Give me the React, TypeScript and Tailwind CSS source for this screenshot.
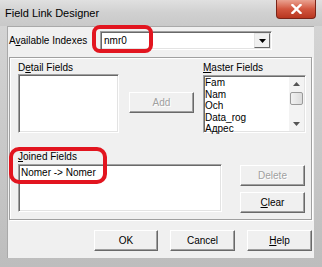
import React from "react";

// classic raised 3D button
function Btn({ children, disabled, className = "" }: { children: React.ReactNode; disabled?: boolean; className?: string }) {
  return (
    <div
      className={`flex items-center justify-center bg-[#f0f0f0] border border-t-white border-l-white border-r-[#696969] border-b-[#696969] shadow-[inset_-1px_-1px_0_#a0a0a0] text-[10px] ${
        disabled ? "text-[#a0a0a0] [text-shadow:1px_1px_0_#ffffff]" : "text-black"
      } ${className}`}
    >
      {children}
    </div>
  );
}

// sunken white box (list / combo)
function Sunken({ children, className = "" }: { children?: React.ReactNode; className?: string }) {
  return (
    <div
      className={`relative bg-white border border-t-[#a0a0a0] border-l-[#a0a0a0] border-r-white border-b-white shadow-[inset_1px_1px_0_#696969,inset_-1px_-1px_0_#e3e3e3] ${className}`}
    >
      {children}
    </div>
  );
}

const masterFields = ["Fam", "Nam", "Och", "Data_rog", "Адрес"];

export default function App() {
  return (
    <div className="relative w-[322px] h-[267px] flex flex-col bg-gradient-to-b from-[#d6d6d6] to-[#bdbdbd] font-['Liberation_Sans',Arial,sans-serif] overflow-hidden">
      {/* Title bar */}
      <div className="h-[26px] flex items-start justify-between bg-gradient-to-b from-[#e0e0e0] via-[#d0d0d0] to-[#c9c9c9]">
        <span className="mt-[8px] ml-[5px] text-[11px] text-black leading-none">Field Link Designer</span>
        <div className="mr-[6px] w-[40px] h-[19px] rounded-b-[4px] border border-t-0 border-[#7a2418] bg-gradient-to-b from-[#e9a190] via-[#d2563f] to-[#b8361f] flex items-center justify-center">
          <svg width="11" height="10" viewBox="0 0 11 10">
            <path d="M1.5 1 L9.5 9 M9.5 1 L1.5 9" stroke="#ffffff" strokeWidth="2.4" strokeLinecap="square" />
          </svg>
        </div>
      </div>

      {/* Frame + content */}
      <div className="flex-1 flex pl-[7px] pr-[8px] pb-[9px]">
        <div className="flex-1 flex flex-col bg-[#f0f0f0] border-l border-t border-[#a9a9a9]">
          {/* Available indexes */}
          <div className="mt-[4px] h-[19px] flex items-center">
            <span className="w-[92px] pl-[1px] text-[10px] text-black">
              A<span className="underline">v</span>ailable Indexes
            </span>
            <Sunken className="w-[172px] h-[19px] flex items-center">
              <span className="ml-[3px] text-[10px] text-black">nmr0</span>
              <div className="absolute right-[1px] top-[1px] w-[16px] h-[15px] bg-[#f0f0f0] border border-t-[#e3e3e3] border-l-[#e3e3e3] border-r-[#696969] border-b-[#696969] flex items-center justify-center">
                <svg width="7" height="4" viewBox="0 0 7 4">
                  <path d="M0 0 H7 L3.5 4 Z" fill="#000" />
                </svg>
              </div>
            </Sunken>
          </div>

          {/* Group box */}
          <div className="mt-[7px] ml-[1px] w-[303px] h-[163px] border border-[#a0a0a0] shadow-[1px_1px_0_#ffffff,inset_1px_1px_0_#ffffff] flex flex-col">
            <div className="flex mt-[4px]">
              <div className="ml-[8px] flex flex-col">
                <span className="h-[12px] text-[10px] leading-[12px] text-black">
                  D<span className="underline">e</span>tail Fields
                </span>
                <Sunken className="w-[101px] h-[59px]" />
              </div>
              <Btn disabled className="ml-[10px] mt-[30px] w-[65px] h-[21px]">
                Add
              </Btn>
              <div className="ml-[9px] flex flex-col">
                <span className="h-[13px] text-[10px] leading-[12px] text-black">
                  <span className="underline">M</span>aster Fields
                </span>
                <Sunken className="w-[103px] h-[58px] flex">
                  <div className="flex-1 flex flex-col pl-[1px] pt-[1px]">
                    {masterFields.map((f) => (
                      <span key={f} className="h-[11.5px] text-[10px] leading-[11.5px] text-black">
                        {f}
                      </span>
                    ))}
                  </div>
                  <div className="w-[15px] mr-[1px] my-[1px] bg-[#f3f3f3] flex flex-col items-center">
                    <div className="h-[14px] flex items-center">
                      <svg width="7" height="4" viewBox="0 0 7 4">
                        <path d="M0 4 H7 L3.5 0 Z" fill="#555" />
                      </svg>
                    </div>
                    <div className="mt-[1px] w-[13px] h-[13px] rounded-[2px] border border-[#9a9a9a] bg-gradient-to-r from-[#f2f2f2] to-[#dcdcdc]" />
                    <div className="flex-1" />
                    <div className="h-[14px] flex items-center">
                      <svg width="7" height="4" viewBox="0 0 7 4">
                        <path d="M0 0 H7 L3.5 4 Z" fill="#555" />
                      </svg>
                    </div>
                  </div>
                </Sunken>
              </div>
            </div>

            <div className="flex mt-[18px]">
              <div className="ml-[8px] flex flex-col">
                <span className="h-[13px] text-[10px] leading-[12px] text-black">
                  <span className="underline">J</span>oined Fields
                </span>
                <Sunken className="w-[204px] h-[48px]">
                  <span className="block ml-[2px] mt-[1px] text-[10px] leading-[13px] text-black">Nomer -&gt; Nomer</span>
                </Sunken>
              </div>
              <div className="ml-[18px] mt-[14px] flex flex-col gap-[6px]">
                <Btn disabled className="w-[65px] h-[21px]">
                  Delete
                </Btn>
                <Btn className="w-[65px] h-[21px]">
                  <span className="underline">C</span>lear
                </Btn>
              </div>
            </div>
          </div>

          {/* Bottom buttons */}
          <div className="mt-[10px] flex justify-end gap-[12px] pr-[2px]">
            <Btn className="w-[64px] h-[21px]">OK</Btn>
            <Btn className="w-[65px] h-[21px]">Cancel</Btn>
            <Btn className="w-[65px] h-[21px]">
              <span className="underline">H</span>elp
            </Btn>
          </div>
        </div>
      </div>

      {/* Hand-drawn red highlights */}
      <div className="absolute left-[92px] top-[25px] w-[61px] h-[28px] rounded-[8px] border-[4px] border-[#e2151f]" />
      <div className="absolute left-[9px] top-[147px] w-[98px] h-[37px] rounded-[10px] border-[4px] border-[#e2151f]" />
    </div>
  );
}
